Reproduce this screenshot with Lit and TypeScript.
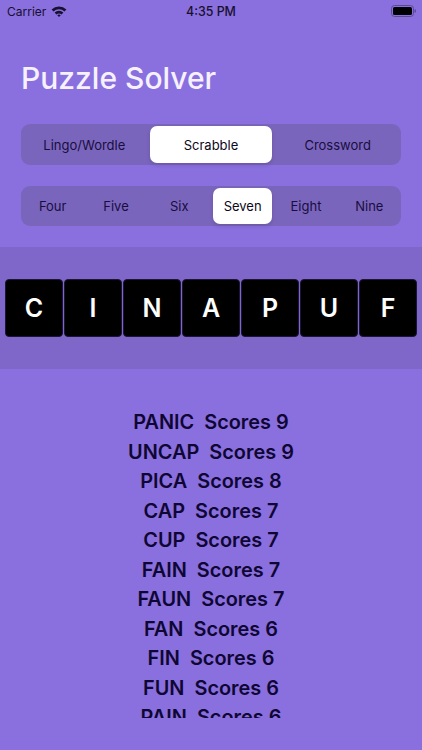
import { LitElement, html, css, svg } from "lit";
import { customElement } from "lit/decorators.js";

const words: [string, number][] = [
  ["PANIC", 9], ["UNCAP", 9], ["PICA", 8], ["CAP", 7], ["CUP", 7], ["FAIN", 7],
  ["FAUN", 7], ["FAN", 6], ["FIN", 6], ["FUN", 6], ["PAIN", 6],
];

@customElement("app-root")
export class AppRoot extends LitElement {
  static styles = css`
    :host {
      display: block; width: 422px; height: 750px; overflow: hidden;
      background: #8a6fdf; font-family: Inter, "Liberation Sans", sans-serif; color: #14093a;
    }
    .status { height: 22px; padding: 0 6px 0 7px; display: flex; align-items: center; justify-content: space-between; position: relative; font-size: 12px; color: #17102e; }
    .left { display: flex; align-items: center; gap: 5px; }
    .time { position: absolute; left: 0; right: 0; text-align: center; font-weight: 500; font-size: 12.4px; }
    .title { margin: 37px 0 0 21px; height: 38px; line-height: 38px; font-size: 30px; font-weight: 500; color: #f6f1ff; }
    .seg { margin: 0 21px; height: 41px; box-sizing: border-box; padding: 2px 0; background: #7a65bc; border-radius: 9px; display: grid; font-size: 13px; }
    .seg > div { display: flex; align-items: center; justify-content: center; border-radius: 7px; color: #180e3e; }
    .seg > .on { background: #fff; color: #0c0820; box-shadow: 0 2px 4px rgba(0,0,0,.14); margin: 0 2px; }
    .s1 { margin-top: 27px; grid-template-columns: repeat(3, 1fr); }
    .s2 { margin-top: 21px; height: 40px; grid-template-columns: repeat(6, 1fr); }
    .band { margin-top: 21px; height: 122px; background: #7f66c9; display: flex; align-items: center; justify-content: center; gap: 1.5px; }
    .tile { width: 57.5px; height: 58px; box-sizing: border-box; background: #000; border: 1px solid #1d1538; border-radius: 4px; color: #fff; font-size: 25px; font-weight: 600; display: flex; align-items: center; justify-content: center; }
    .list { margin-top: 39px; height: 310px; overflow: hidden; }
    .row { height: 29.5px; line-height: 29.5px; text-align: center; font-size: 19.9px; font-weight: 600; white-space: pre; color: #0f0733; }
  `;

  render() {
    const wifi = svg`<path d="M0.6 4.4A10.8 10.8 0 0 1 15.4 4.4L13.5 6.5A8 8 0 0 0 2.5 6.5Z"/><path d="M3.6 7.5A6.6 6.6 0 0 1 12.4 7.5L10.6 9.4A4.2 4.2 0 0 0 5.4 9.4Z"/><path d="M6.3 10.3A2.6 2.6 0 0 1 9.7 10.3L8 12Z"/>`;
    return html`
      <div class="status">
        <div class="left"><span>Carrier</span><svg width="16" height="12" viewBox="0 0 16 12" fill="#17102e">${wifi}</svg></div>
        <div class="time">4:35 PM</div>
        <svg width="25" height="12" viewBox="0 0 25 12"><rect x="0.5" y="0.5" width="22" height="11" rx="3" fill="none" stroke="#5a4a90"/><rect x="2" y="2" width="19" height="8" rx="1.6" fill="#000"/><rect x="23.5" y="4.2" width="1.4" height="3.6" rx=".7" fill="#5a4a90"/></svg>
      </div>
      <div class="title">Puzzle Solver</div>
      <div class="seg s1">
        <div>Lingo/Wordle</div><div class="on">Scrabble</div><div>Crossword</div>
      </div>
      <div class="seg s2">
        ${["Four", "Five", "Six", "Seven", "Eight", "Nine"].map((t) => html`<div class=${t === "Seven" ? "on" : ""}>${t}</div>`)}
      </div>
      <div class="band">
        ${"CINAPUF".split("").map((c) => html`<div class="tile">${c}</div>`)}
      </div>
      <div class="list">
        ${words.map(([w, s]) => html`<div class="row">${w}  Scores ${s}</div>`)}
      </div>
    `;
  }
}
